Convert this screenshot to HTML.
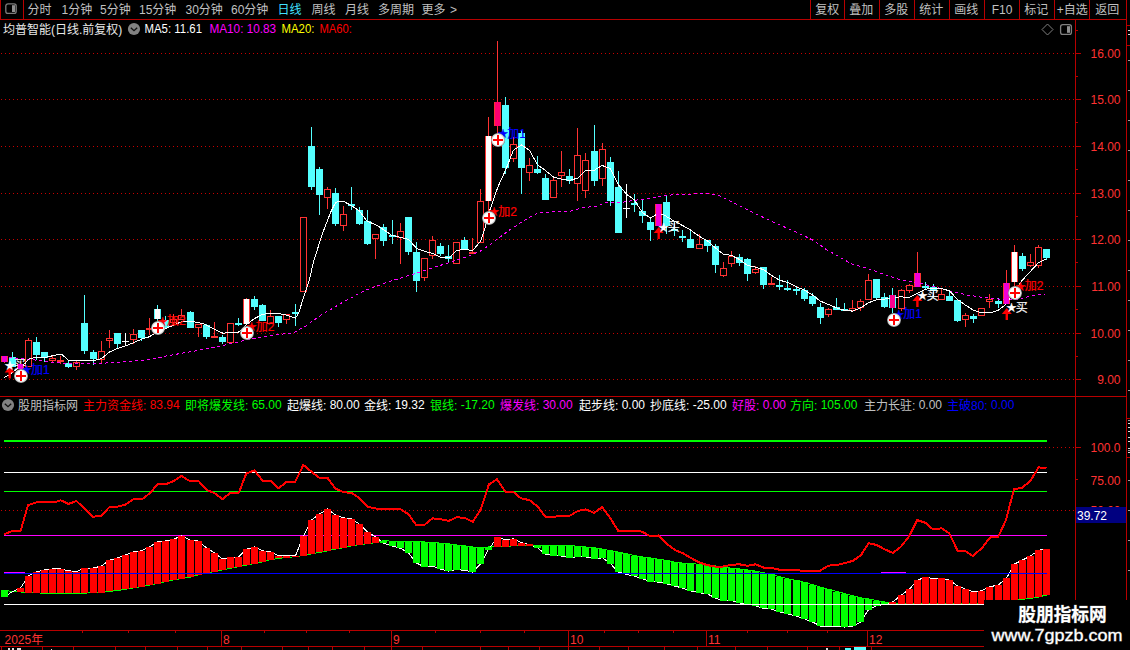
<!DOCTYPE html>
<html lang="zh-CN">
<head>
<meta charset="utf-8">
<title>均普智能 日线</title>
<style>
html,body{margin:0;padding:0;background:#000;}
body{width:1130px;height:650px;overflow:hidden;font-family:"Liberation Sans","Noto Sans CJK SC",sans-serif;}
svg text{white-space:pre;}
</style>
</head>
<body>
<svg width="1130" height="650" viewBox="0 0 1130 650" style="display:block">
<g shape-rendering="crispEdges">
<line x1="1" x2="1074" y1="53.5" y2="53.5" stroke="#c80000" stroke-width="1" stroke-dasharray="1 3"/>
<line x1="1" x2="1074" y1="99.5" y2="99.5" stroke="#c80000" stroke-width="1" stroke-dasharray="1 3"/>
<line x1="1" x2="1074" y1="146.5" y2="146.5" stroke="#c80000" stroke-width="1" stroke-dasharray="1 3"/>
<line x1="1" x2="1074" y1="193.5" y2="193.5" stroke="#c80000" stroke-width="1" stroke-dasharray="1 3"/>
<line x1="1" x2="1074" y1="239.5" y2="239.5" stroke="#c80000" stroke-width="1" stroke-dasharray="1 3"/>
<line x1="1" x2="1074" y1="286.5" y2="286.5" stroke="#c80000" stroke-width="1" stroke-dasharray="1 3"/>
<line x1="1" x2="1074" y1="333.5" y2="333.5" stroke="#c80000" stroke-width="1" stroke-dasharray="1 3"/>
<line x1="1" x2="1074" y1="379.5" y2="379.5" stroke="#c80000" stroke-width="1" stroke-dasharray="1 3"/>
<line x1="1" x2="1074" y1="447.5" y2="447.5" stroke="#c80000" stroke-width="1" stroke-dasharray="1 3"/>
<line x1="1" x2="1074" y1="510.5" y2="510.5" stroke="#c80000" stroke-width="1" stroke-dasharray="1 3"/>
</g>
<g shape-rendering="crispEdges">
<rect x="4" y="440" width="1043" height="2" fill="#00ff00"/>
<rect x="4" y="472" width="1043" height="1" fill="#ffffff"/>
<rect x="4" y="491" width="1043" height="1" fill="#00ff00"/>
<rect x="4" y="535" width="1043" height="1" fill="#ff00ff"/>
</g>
<polyline points="4.5,590.2 12.5,591.5 20.5,592 28.5,592.6 36.5,592.7 44.5,593.4 52.5,593.4 60.5,593.4 68.5,593.4 76.5,593.4 84.5,593.1 93.5,592.7 101.5,592.6 109.5,591.4 117.5,590.5 125.5,589.3 133.5,588 141.5,586.6 149.5,585.1 157.5,583.6 165.5,581.7 173.5,579.9 181.5,578.7 190.5,577 198.5,574.8 206.5,573.1 214.5,571.6 222.5,569.9 230.5,568.2 238.5,566.8 246.5,565.1 254.5,563.5 262.5,561.8 270.5,559.7 278.5,558.4 286.5,557.5 295.5,556.7 303.5,555.5 311.5,553.8 319.5,552.5 327.5,550.8 335.5,549.1 343.5,547.8 351.5,545.8 359.5,544.6 367.5,543.7 375.5,542.7 383.5,540.7 392.5,541.2 400.5,541.2 408.5,541.5 416.5,541.5 424.5,542 432.5,542.4 440.5,543.2 448.5,543.8 456.5,545 464.5,545.8 472.5,547 480.5,547 488.5,547 497.5,546.6 505.5,546.6 513.5,545.8 521.5,545.6 529.5,545.6 537.5,545.3 545.5,545.3 553.5,545.6 561.5,545.6 569.5,545.8 577.5,546.1 585.5,547 594.5,547.8 602.5,549.1 610.5,550.6 618.5,552.2 626.5,553.8 634.5,555.5 642.5,557 650.5,558 658.5,559.2 666.5,560.4 674.5,562.1 682.5,563.1 690.5,563.5 699.5,564.3 707.5,565.1 715.5,566 723.5,567.2 731.5,568.2 739.5,569 747.5,569.9 755.5,571.1 763.5,572.6 771.5,574.4 779.5,576.6 787.5,578.6 796.5,580.5 804.5,582.5 812.5,584.6 820.5,587.1 828.5,589.3 836.5,591.5 844.5,593.5 852.5,595.7 860.5,597.8 868.5,598.9 876.5,600.6 884.5,602 892.5,603.8 901.5,603.8 909.5,603.8 917.5,603.8 925.5,603.8 933.5,603.8 941.5,603.8 949.5,603.8 957.5,603.8 965.5,603.8 973.5,603.8 981.5,603.8 989.5,603 998.5,602.5 1006.5,601.5 1014.5,600.5 1022.5,599.3 1030.5,598.4 1038.5,597 1046.5,595" fill="none" stroke="#00ff00" stroke-width="1" shape-rendering="crispEdges"/>
<polyline points="4.5,596.8 12.5,591.5 20.5,588 28.5,575.8 36.5,571.9 44.5,569.9 52.5,568.9 60.5,568.9 68.5,570.7 76.5,571.9 84.5,568 93.5,568 101.5,566 109.5,560.1 117.5,558 125.5,555 133.5,551.9 141.5,550.8 149.5,546.9 157.5,542 165.5,541 173.5,539.3 181.5,535.9 190.5,540.1 198.5,541.1 206.5,547.9 214.5,553 222.5,558.9 230.5,557.2 238.5,557 246.5,549.1 254.5,547 262.5,550.8 270.5,551.9 278.5,555.8 286.5,555.8 295.5,555.8 303.5,535.8 311.5,520 319.5,514 327.5,509 335.5,515 343.5,517.8 351.5,519 359.5,524.1 367.5,531.9 375.5,537 383.5,543.2 392.5,546.1 400.5,548.3 408.5,553 416.5,563 424.5,566.9 432.5,566.1 440.5,569.1 448.5,571.1 456.5,569.5 464.5,570.4 472.5,572 480.5,563.9 488.5,549.5 497.5,537.2 505.5,539.7 513.5,538.9 521.5,542.8 529.5,544.5 537.5,547.8 545.5,554.1 553.5,555.8 561.5,556 569.5,557.6 577.5,556.8 585.5,556.8 594.5,558.8 602.5,557.8 610.5,563.7 618.5,572 626.5,574.5 634.5,576.1 642.5,578.7 650.5,581.7 658.5,582.1 666.5,583.8 674.5,586 682.5,588 690.5,590.9 699.5,592.7 707.5,593.9 715.5,598.1 723.5,600.7 731.5,600.7 739.5,602.9 747.5,604.1 755.5,605.8 763.5,608.3 771.5,609.1 779.5,611.8 787.5,613.8 796.5,616 804.5,618.9 812.5,622 820.5,626 828.5,626 836.5,626.5 844.5,627 852.5,626 860.5,622.3 868.5,609.6 876.5,605.9 884.5,604.2 892.5,602 901.5,595 909.5,589.1 917.5,580.1 925.5,577.2 933.5,578.6 941.5,578.1 949.5,580.1 957.5,586 965.5,589.1 973.5,591.9 981.5,590.8 989.5,587 998.5,584.8 1006.5,578.1 1014.5,564 1022.5,560 1030.5,556.1 1038.5,550.2 1046.5,549" fill="none" stroke="#ffffff" stroke-width="1" shape-rendering="crispEdges"/>
<g shape-rendering="crispEdges">
<rect x="1" y="590" width="7" height="7" fill="#00ff00"/>
<rect x="17" y="588" width="7" height="4" fill="#ff0000"/>
<rect x="25" y="576" width="7" height="17" fill="#ff0000"/>
<rect x="33" y="572" width="7" height="21" fill="#ff0000"/>
<rect x="41" y="570" width="7" height="23" fill="#ff0000"/>
<rect x="49" y="569" width="7" height="24" fill="#ff0000"/>
<rect x="57" y="569" width="7" height="24" fill="#ff0000"/>
<rect x="65" y="571" width="7" height="22" fill="#ff0000"/>
<rect x="73" y="572" width="7" height="21" fill="#ff0000"/>
<rect x="81" y="568" width="7" height="25" fill="#ff0000"/>
<rect x="90" y="568" width="7" height="25" fill="#ff0000"/>
<rect x="98" y="566" width="7" height="27" fill="#ff0000"/>
<rect x="106" y="560" width="7" height="31" fill="#ff0000"/>
<rect x="114" y="558" width="7" height="32" fill="#ff0000"/>
<rect x="122" y="555" width="7" height="34" fill="#ff0000"/>
<rect x="130" y="552" width="7" height="36" fill="#ff0000"/>
<rect x="138" y="551" width="7" height="36" fill="#ff0000"/>
<rect x="146" y="547" width="7" height="38" fill="#ff0000"/>
<rect x="154" y="542" width="7" height="42" fill="#ff0000"/>
<rect x="162" y="541" width="7" height="41" fill="#ff0000"/>
<rect x="170" y="539" width="7" height="41" fill="#ff0000"/>
<rect x="178" y="536" width="7" height="43" fill="#ff0000"/>
<rect x="187" y="540" width="7" height="37" fill="#ff0000"/>
<rect x="195" y="541" width="7" height="34" fill="#ff0000"/>
<rect x="203" y="548" width="7" height="25" fill="#ff0000"/>
<rect x="211" y="553" width="7" height="19" fill="#ff0000"/>
<rect x="219" y="559" width="7" height="11" fill="#ff0000"/>
<rect x="227" y="557" width="7" height="11" fill="#ff0000"/>
<rect x="235" y="557" width="7" height="10" fill="#ff0000"/>
<rect x="243" y="549" width="7" height="16" fill="#ff0000"/>
<rect x="251" y="547" width="7" height="17" fill="#ff0000"/>
<rect x="259" y="551" width="7" height="11" fill="#ff0000"/>
<rect x="267" y="552" width="7" height="8" fill="#ff0000"/>
<rect x="275" y="556" width="7" height="2" fill="#ff0000"/>
<rect x="283" y="556" width="7" height="2" fill="#ff0000"/>
<rect x="292" y="556" width="7" height="1" fill="#ff0000"/>
<rect x="300" y="536" width="7" height="20" fill="#ff0000"/>
<rect x="308" y="520" width="7" height="34" fill="#ff0000"/>
<rect x="316" y="514" width="7" height="38" fill="#ff0000"/>
<rect x="324" y="509" width="7" height="42" fill="#ff0000"/>
<rect x="332" y="515" width="7" height="34" fill="#ff0000"/>
<rect x="340" y="518" width="7" height="30" fill="#ff0000"/>
<rect x="348" y="519" width="7" height="27" fill="#ff0000"/>
<rect x="356" y="524" width="7" height="21" fill="#ff0000"/>
<rect x="364" y="532" width="7" height="12" fill="#ff0000"/>
<rect x="372" y="537" width="7" height="6" fill="#ff0000"/>
<rect x="380" y="541" width="7" height="2" fill="#00ff00"/>
<rect x="389" y="541" width="7" height="5" fill="#00ff00"/>
<rect x="397" y="541" width="7" height="7" fill="#00ff00"/>
<rect x="405" y="542" width="7" height="11" fill="#00ff00"/>
<rect x="413" y="542" width="7" height="21" fill="#00ff00"/>
<rect x="421" y="542" width="7" height="25" fill="#00ff00"/>
<rect x="429" y="542" width="7" height="24" fill="#00ff00"/>
<rect x="437" y="543" width="7" height="26" fill="#00ff00"/>
<rect x="445" y="544" width="7" height="27" fill="#00ff00"/>
<rect x="453" y="545" width="7" height="25" fill="#00ff00"/>
<rect x="461" y="546" width="7" height="24" fill="#00ff00"/>
<rect x="469" y="547" width="7" height="25" fill="#00ff00"/>
<rect x="477" y="547" width="7" height="17" fill="#00ff00"/>
<rect x="485" y="547" width="7" height="3" fill="#00ff00"/>
<rect x="494" y="537" width="7" height="10" fill="#ff0000"/>
<rect x="502" y="540" width="7" height="7" fill="#ff0000"/>
<rect x="510" y="539" width="7" height="7" fill="#ff0000"/>
<rect x="518" y="543" width="7" height="3" fill="#ff0000"/>
<rect x="526" y="544" width="7" height="2" fill="#ff0000"/>
<rect x="534" y="545" width="7" height="3" fill="#00ff00"/>
<rect x="542" y="545" width="7" height="9" fill="#00ff00"/>
<rect x="550" y="546" width="7" height="10" fill="#00ff00"/>
<rect x="558" y="546" width="7" height="10" fill="#00ff00"/>
<rect x="566" y="546" width="7" height="12" fill="#00ff00"/>
<rect x="574" y="546" width="7" height="11" fill="#00ff00"/>
<rect x="582" y="547" width="7" height="10" fill="#00ff00"/>
<rect x="591" y="548" width="7" height="11" fill="#00ff00"/>
<rect x="599" y="549" width="7" height="9" fill="#00ff00"/>
<rect x="607" y="551" width="7" height="13" fill="#00ff00"/>
<rect x="615" y="552" width="7" height="20" fill="#00ff00"/>
<rect x="623" y="554" width="7" height="20" fill="#00ff00"/>
<rect x="631" y="556" width="7" height="20" fill="#00ff00"/>
<rect x="639" y="557" width="7" height="22" fill="#00ff00"/>
<rect x="647" y="558" width="7" height="24" fill="#00ff00"/>
<rect x="655" y="559" width="7" height="23" fill="#00ff00"/>
<rect x="663" y="560" width="7" height="24" fill="#00ff00"/>
<rect x="671" y="562" width="7" height="24" fill="#00ff00"/>
<rect x="679" y="563" width="7" height="25" fill="#00ff00"/>
<rect x="687" y="564" width="7" height="27" fill="#00ff00"/>
<rect x="696" y="564" width="7" height="29" fill="#00ff00"/>
<rect x="704" y="565" width="7" height="29" fill="#00ff00"/>
<rect x="712" y="566" width="7" height="32" fill="#00ff00"/>
<rect x="720" y="567" width="7" height="34" fill="#00ff00"/>
<rect x="728" y="568" width="7" height="33" fill="#00ff00"/>
<rect x="736" y="569" width="7" height="34" fill="#00ff00"/>
<rect x="744" y="570" width="7" height="34" fill="#00ff00"/>
<rect x="752" y="571" width="7" height="35" fill="#00ff00"/>
<rect x="760" y="573" width="7" height="35" fill="#00ff00"/>
<rect x="768" y="574" width="7" height="35" fill="#00ff00"/>
<rect x="776" y="577" width="7" height="35" fill="#00ff00"/>
<rect x="784" y="579" width="7" height="35" fill="#00ff00"/>
<rect x="793" y="580" width="7" height="36" fill="#00ff00"/>
<rect x="801" y="582" width="7" height="37" fill="#00ff00"/>
<rect x="809" y="585" width="7" height="37" fill="#00ff00"/>
<rect x="817" y="587" width="7" height="39" fill="#00ff00"/>
<rect x="825" y="589" width="7" height="37" fill="#00ff00"/>
<rect x="833" y="592" width="7" height="34" fill="#00ff00"/>
<rect x="841" y="594" width="7" height="33" fill="#00ff00"/>
<rect x="849" y="596" width="7" height="30" fill="#00ff00"/>
<rect x="857" y="598" width="7" height="24" fill="#00ff00"/>
<rect x="865" y="599" width="7" height="11" fill="#00ff00"/>
<rect x="873" y="601" width="7" height="5" fill="#00ff00"/>
<rect x="881" y="602" width="7" height="2" fill="#00ff00"/>
<rect x="889" y="602" width="7" height="2" fill="#ff0000"/>
<rect x="898" y="595" width="7" height="9" fill="#ff0000"/>
<rect x="906" y="589" width="7" height="15" fill="#ff0000"/>
<rect x="914" y="580" width="7" height="24" fill="#ff0000"/>
<rect x="922" y="577" width="7" height="27" fill="#ff0000"/>
<rect x="930" y="579" width="7" height="25" fill="#ff0000"/>
<rect x="938" y="578" width="7" height="26" fill="#ff0000"/>
<rect x="946" y="580" width="7" height="24" fill="#ff0000"/>
<rect x="954" y="586" width="7" height="18" fill="#ff0000"/>
<rect x="962" y="589" width="7" height="15" fill="#ff0000"/>
<rect x="970" y="592" width="7" height="12" fill="#ff0000"/>
<rect x="978" y="591" width="7" height="13" fill="#ff0000"/>
<rect x="986" y="587" width="7" height="16" fill="#ff0000"/>
<rect x="995" y="585" width="7" height="17" fill="#ff0000"/>
<rect x="1003" y="578" width="7" height="24" fill="#ff0000"/>
<rect x="1011" y="564" width="7" height="36" fill="#ff0000"/>
<rect x="1019" y="560" width="7" height="39" fill="#ff0000"/>
<rect x="1027" y="556" width="7" height="42" fill="#ff0000"/>
<rect x="1035" y="550" width="7" height="47" fill="#ff0000"/>
<rect x="1043" y="549" width="7" height="46" fill="#ff0000"/>
</g>
<g shape-rendering="crispEdges">
<rect x="4" y="604" width="980" height="1" fill="#ffffff"/>
<rect x="4" y="573" width="1043" height="1" fill="#0000ff"/>
<rect x="4" y="572" width="21" height="1" fill="#ff00ff"/>
<rect x="881" y="572" width="25" height="1" fill="#ff00ff"/>
</g>
<polyline points="4.2,534.1 12.7,531 20.6,531 27.9,505.3 36.4,502.3 44.5,502.3 55.8,501.9 60.6,500.2 68.5,503.9 76.5,501.1 84.6,508.7 92.6,516.8 101,515.8 109.5,507 117.6,506.6 125.5,504.5 133.7,499 143,498.5 150.6,492.6 157.7,483.8 166.7,483.8 173.7,481.1 181.3,475.9 188.9,480.6 198.2,480.6 206.7,489.9 214.3,493 222.4,499.2 230.4,492.8 238.8,492.8 246.4,473.3 254.6,470.5 262.5,480.6 270.5,480.6 278.6,488.2 286.7,481.8 295.2,481.8 303.4,464.9 311.3,471.6 319.3,477.7 327.4,477.7 335.5,488.7 343.7,492.1 351.8,493 359.7,498.4 367.9,506.8 376,508.5 379.5,509.4 400.7,509.4 408.3,514.1 416.2,524.9 424.4,524.9 432.5,518.3 440.4,519.2 448.6,520.9 456.7,517.3 464.6,517.8 472.8,521.9 481,508.9 488.9,484.4 497,479.3 505.2,491.7 513.3,492 521.2,498.4 529.4,500.1 537.5,506.4 545.4,516.9 553.6,516.9 561.7,515.7 569.8,515.7 577.7,511 585.9,509.4 594,512.8 602.1,507.2 610.2,518 618.3,531 626.2,531 634.3,530.5 642.5,531.8 650.4,536.4 658.5,535.5 666.7,543.7 674.8,549.9 682.9,553.3 690.9,558 699,562.3 707.1,565.1 715.2,566.5 723.4,566.5 731.3,564.8 739.4,564.3 747.5,565.7 755.7,564.3 763.7,567.6 771.7,568.1 779.8,569.8 796,570.3 804.1,570.7 820.2,570.7 828.3,565.6 836.5,565.1 844.4,563.1 852.5,561 860.7,555.5 868.6,543.1 876.7,545 884.9,549.5 893,552.9 900.9,546.7 909.1,536.3 917.1,520.1 925.2,522.7 933.1,529.4 941.6,528.3 949.2,533.2 957.7,550.9 965.3,550.9 972.9,556 982.2,547.7 990.7,536.7 998.3,536.7 1005.9,520.1 1014,489.3 1022,487.7 1030.4,480.9 1038.6,467.4 1046.5,468" fill="none" stroke="#ff0000" stroke-width="2" stroke-linejoin="round" shape-rendering="crispEdges"/>
<g shape-rendering="crispEdges">
<rect x="4" y="356" width="1" height="7" fill="#ff3232"/>
<rect x="1" y="356" width="7" height="6" fill="#ff3232"/>
<rect x="2" y="356" width="5" height="6" fill="#f000d8"/>
<rect x="12" y="352" width="1" height="15" fill="#54ffff"/>
<rect x="9" y="357" width="7" height="10" fill="#54ffff"/>
<rect x="20" y="364" width="1" height="5" fill="#ff3232"/>
<rect x="17" y="364" width="7" height="5" fill="#ff3232"/>
<rect x="18" y="364" width="5" height="5" fill="#f000d8"/>
<rect x="28" y="338" width="1" height="2" fill="#ff3232"/>
<rect x="25.5" y="340.5" width="6" height="26" fill="#000" stroke="#ff3232" stroke-width="1"/>
<rect x="36" y="337" width="1" height="23" fill="#54ffff"/>
<rect x="33" y="342" width="7" height="13" fill="#54ffff"/>
<rect x="44" y="352" width="1" height="10" fill="#54ffff"/>
<rect x="41" y="352" width="7" height="6" fill="#54ffff"/>
<rect x="52" y="355" width="1" height="3" fill="#ff3232"/>
<rect x="52" y="361" width="1" height="1" fill="#ff3232"/>
<rect x="49.5" y="358.5" width="6" height="2" fill="#000" stroke="#ff3232" stroke-width="1"/>
<rect x="60" y="356" width="1" height="8" fill="#ff3232"/>
<rect x="57" y="360" width="7" height="2" fill="#ff3232"/>
<rect x="68" y="361" width="1" height="7" fill="#54ffff"/>
<rect x="65" y="363" width="7" height="4" fill="#54ffff"/>
<rect x="76" y="360" width="1" height="2" fill="#ff3232"/>
<rect x="76" y="367" width="1" height="3" fill="#ff3232"/>
<rect x="73.5" y="362.5" width="6" height="4" fill="#000" stroke="#ff3232" stroke-width="1"/>
<rect x="84" y="295" width="1" height="59" fill="#54ffff"/>
<rect x="81" y="323" width="7" height="28" fill="#54ffff"/>
<rect x="93" y="350" width="1" height="15" fill="#54ffff"/>
<rect x="90" y="352" width="7" height="7" fill="#54ffff"/>
<rect x="101" y="341" width="1" height="10" fill="#ff3232"/>
<rect x="101" y="360" width="1" height="3" fill="#ff3232"/>
<rect x="98.5" y="351.5" width="6" height="8" fill="#000" stroke="#ff3232" stroke-width="1"/>
<rect x="109" y="330" width="1" height="8" fill="#ff3232"/>
<rect x="109" y="341" width="1" height="7" fill="#ff3232"/>
<rect x="106.5" y="338.5" width="6" height="2" fill="#000" stroke="#ff3232" stroke-width="1"/>
<rect x="117" y="333" width="1" height="15" fill="#54ffff"/>
<rect x="114" y="333" width="7" height="11" fill="#54ffff"/>
<rect x="125" y="333" width="1" height="12" fill="#ffffff"/>
<rect x="122" y="341" width="7" height="1" fill="#ffffff"/>
<rect x="133" y="329" width="1" height="5" fill="#ff3232"/>
<rect x="133" y="340" width="1" height="4" fill="#ff3232"/>
<rect x="130.5" y="334.5" width="6" height="5" fill="#000" stroke="#ff3232" stroke-width="1"/>
<rect x="141" y="330" width="1" height="11" fill="#54ffff"/>
<rect x="138" y="330" width="7" height="8" fill="#54ffff"/>
<rect x="149" y="318" width="1" height="17" fill="#ff3232"/>
<rect x="146" y="328" width="7" height="2" fill="#ff3232"/>
<rect x="157" y="305" width="1" height="19" fill="#54ffff"/>
<rect x="154" y="309" width="7" height="10" fill="#54ffff"/>
<rect x="155" y="309" width="5" height="10" fill="#ffffff"/>
<rect x="165" y="316" width="1" height="12" fill="#54ffff"/>
<rect x="162" y="320" width="7" height="8" fill="#54ffff"/>
<rect x="173" y="314" width="1" height="5" fill="#ff3232"/>
<rect x="173" y="323" width="1" height="3" fill="#ff3232"/>
<rect x="170.5" y="319.5" width="6" height="3" fill="#000" stroke="#ff3232" stroke-width="1"/>
<rect x="181" y="309" width="1" height="6" fill="#ff3232"/>
<rect x="178.5" y="315.5" width="6" height="4" fill="#000" stroke="#ff3232" stroke-width="1"/>
<rect x="190" y="311" width="1" height="17" fill="#54ffff"/>
<rect x="187" y="312" width="7" height="16" fill="#54ffff"/>
<rect x="198" y="328" width="1" height="9" fill="#ff3232"/>
<rect x="195.5" y="324.5" width="6" height="3" fill="#000" stroke="#ff3232" stroke-width="1"/>
<rect x="206" y="324" width="1" height="15" fill="#54ffff"/>
<rect x="203" y="325" width="7" height="12" fill="#54ffff"/>
<rect x="214" y="322" width="1" height="15" fill="#ff3232"/>
<rect x="211" y="336" width="7" height="2" fill="#ff3232"/>
<rect x="222" y="335" width="1" height="9" fill="#54ffff"/>
<rect x="219" y="337" width="7" height="5" fill="#54ffff"/>
<rect x="227.5" y="323.5" width="6" height="19" fill="#000" stroke="#ff3232" stroke-width="1"/>
<rect x="238" y="318" width="1" height="8" fill="#54ffff"/>
<rect x="235" y="323" width="7" height="2" fill="#54ffff"/>
<rect x="246" y="298" width="1" height="26" fill="#ff3232"/>
<rect x="243" y="299" width="7" height="25" fill="#ff3232"/>
<rect x="244" y="299" width="5" height="25" fill="#ffffff"/>
<rect x="254" y="296" width="1" height="14" fill="#54ffff"/>
<rect x="251" y="299" width="7" height="8" fill="#54ffff"/>
<rect x="262" y="304" width="1" height="17" fill="#54ffff"/>
<rect x="259" y="305" width="7" height="16" fill="#54ffff"/>
<rect x="270" y="310" width="1" height="6" fill="#ff3232"/>
<rect x="267.5" y="316.5" width="6" height="7" fill="#000" stroke="#ff3232" stroke-width="1"/>
<rect x="278" y="316" width="1" height="11" fill="#54ffff"/>
<rect x="275" y="316" width="7" height="7" fill="#54ffff"/>
<rect x="286" y="320" width="1" height="4" fill="#ff3232"/>
<rect x="283.5" y="314.5" width="6" height="5" fill="#000" stroke="#ff3232" stroke-width="1"/>
<rect x="295" y="304" width="1" height="22" fill="#54ffff"/>
<rect x="292" y="312" width="7" height="2" fill="#54ffff"/>
<rect x="300.5" y="217.5" width="6" height="74" fill="#000" stroke="#ff3232" stroke-width="1"/>
<rect x="311" y="127" width="1" height="63" fill="#54ffff"/>
<rect x="308" y="146" width="7" height="41" fill="#54ffff"/>
<rect x="319" y="167" width="1" height="48" fill="#54ffff"/>
<rect x="316" y="169" width="7" height="26" fill="#54ffff"/>
<rect x="327" y="187" width="1" height="2" fill="#ff3232"/>
<rect x="327" y="198" width="1" height="11" fill="#ff3232"/>
<rect x="324.5" y="189.5" width="6" height="8" fill="#000" stroke="#ff3232" stroke-width="1"/>
<rect x="335" y="188" width="1" height="38" fill="#54ffff"/>
<rect x="332" y="193" width="7" height="31" fill="#54ffff"/>
<rect x="343" y="206" width="1" height="8" fill="#ff3232"/>
<rect x="343" y="226" width="1" height="5" fill="#ff3232"/>
<rect x="340.5" y="214.5" width="6" height="11" fill="#000" stroke="#ff3232" stroke-width="1"/>
<rect x="351" y="187" width="1" height="23" fill="#54ffff"/>
<rect x="348" y="204" width="7" height="2" fill="#54ffff"/>
<rect x="359" y="207" width="1" height="18" fill="#54ffff"/>
<rect x="356" y="210" width="7" height="14" fill="#54ffff"/>
<rect x="367" y="210" width="1" height="35" fill="#54ffff"/>
<rect x="364" y="221" width="7" height="23" fill="#54ffff"/>
<rect x="375" y="239" width="1" height="20" fill="#ff3232"/>
<rect x="372.5" y="234.5" width="6" height="4" fill="#000" stroke="#ff3232" stroke-width="1"/>
<rect x="383" y="224" width="1" height="22" fill="#54ffff"/>
<rect x="380" y="227" width="7" height="14" fill="#54ffff"/>
<rect x="392" y="220" width="1" height="24" fill="#54ffff"/>
<rect x="389" y="235" width="7" height="2" fill="#54ffff"/>
<rect x="400" y="223" width="1" height="8" fill="#ff3232"/>
<rect x="400" y="238" width="1" height="26" fill="#ff3232"/>
<rect x="397.5" y="231.5" width="6" height="6" fill="#000" stroke="#ff3232" stroke-width="1"/>
<rect x="408" y="217" width="1" height="38" fill="#54ffff"/>
<rect x="405" y="217" width="7" height="35" fill="#54ffff"/>
<rect x="416" y="242" width="1" height="50" fill="#54ffff"/>
<rect x="413" y="252" width="7" height="29" fill="#54ffff"/>
<rect x="424" y="278" width="1" height="3" fill="#ff3232"/>
<rect x="421.5" y="258.5" width="6" height="19" fill="#000" stroke="#ff3232" stroke-width="1"/>
<rect x="432" y="236" width="1" height="4" fill="#ff3232"/>
<rect x="432" y="256" width="1" height="3" fill="#ff3232"/>
<rect x="429.5" y="240.5" width="6" height="15" fill="#000" stroke="#ff3232" stroke-width="1"/>
<rect x="440" y="243" width="1" height="13" fill="#54ffff"/>
<rect x="437" y="246" width="7" height="8" fill="#54ffff"/>
<rect x="448" y="245" width="1" height="18" fill="#54ffff"/>
<rect x="445" y="256" width="7" height="3" fill="#54ffff"/>
<rect x="453.5" y="242.5" width="6" height="21" fill="#000" stroke="#ff3232" stroke-width="1"/>
<rect x="464" y="237" width="1" height="13" fill="#54ffff"/>
<rect x="461" y="240" width="7" height="10" fill="#54ffff"/>
<rect x="472" y="238" width="1" height="16" fill="#ff3232"/>
<rect x="469" y="252" width="7" height="2" fill="#ff3232"/>
<rect x="480" y="189" width="1" height="12" fill="#ff3232"/>
<rect x="477.5" y="201.5" width="6" height="41" fill="#000" stroke="#ff3232" stroke-width="1"/>
<rect x="488" y="117" width="1" height="94" fill="#ff3232"/>
<rect x="485" y="136" width="7" height="65" fill="#ff3232"/>
<rect x="486" y="136" width="5" height="65" fill="#ffffff"/>
<rect x="497" y="41" width="1" height="94" fill="#ff3232"/>
<rect x="494" y="102" width="7" height="24" fill="#ff3232"/>
<rect x="495" y="102" width="5" height="24" fill="#ff0070"/>
<rect x="505" y="97" width="1" height="77" fill="#54ffff"/>
<rect x="502" y="105" width="7" height="63" fill="#54ffff"/>
<rect x="513" y="137" width="1" height="7" fill="#ff3232"/>
<rect x="513" y="159" width="1" height="3" fill="#ff3232"/>
<rect x="510.5" y="144.5" width="6" height="14" fill="#000" stroke="#ff3232" stroke-width="1"/>
<rect x="521" y="130" width="1" height="64" fill="#54ffff"/>
<rect x="518" y="133" width="7" height="35" fill="#54ffff"/>
<rect x="529" y="158" width="1" height="7" fill="#ff3232"/>
<rect x="529" y="173" width="1" height="8" fill="#ff3232"/>
<rect x="526.5" y="165.5" width="6" height="7" fill="#000" stroke="#ff3232" stroke-width="1"/>
<rect x="537" y="156" width="1" height="18" fill="#54ffff"/>
<rect x="534" y="169" width="7" height="4" fill="#54ffff"/>
<rect x="545" y="174" width="1" height="26" fill="#54ffff"/>
<rect x="542" y="178" width="7" height="22" fill="#54ffff"/>
<rect x="553" y="177" width="1" height="3" fill="#ff3232"/>
<rect x="550.5" y="180.5" width="6" height="17" fill="#000" stroke="#ff3232" stroke-width="1"/>
<rect x="561" y="151" width="1" height="21" fill="#ff3232"/>
<rect x="561" y="176" width="1" height="11" fill="#ff3232"/>
<rect x="558.5" y="172.5" width="6" height="3" fill="#000" stroke="#ff3232" stroke-width="1"/>
<rect x="569" y="169" width="1" height="15" fill="#54ffff"/>
<rect x="566" y="176" width="7" height="5" fill="#54ffff"/>
<rect x="577" y="128" width="1" height="27" fill="#ff3232"/>
<rect x="577" y="184" width="1" height="17" fill="#ff3232"/>
<rect x="574.5" y="155.5" width="6" height="28" fill="#000" stroke="#ff3232" stroke-width="1"/>
<rect x="585" y="153" width="1" height="7" fill="#ff3232"/>
<rect x="585" y="191" width="1" height="7" fill="#ff3232"/>
<rect x="582.5" y="160.5" width="6" height="30" fill="#000" stroke="#ff3232" stroke-width="1"/>
<rect x="594" y="125" width="1" height="61" fill="#54ffff"/>
<rect x="591" y="151" width="7" height="30" fill="#54ffff"/>
<rect x="602" y="143" width="1" height="6" fill="#ff3232"/>
<rect x="602" y="179" width="1" height="7" fill="#ff3232"/>
<rect x="599.5" y="149.5" width="6" height="29" fill="#000" stroke="#ff3232" stroke-width="1"/>
<rect x="610" y="157" width="1" height="49" fill="#54ffff"/>
<rect x="607" y="162" width="7" height="39" fill="#54ffff"/>
<rect x="618" y="171" width="1" height="62" fill="#54ffff"/>
<rect x="615" y="187" width="7" height="46" fill="#54ffff"/>
<rect x="626" y="184" width="1" height="34" fill="#ffffff"/>
<rect x="623" y="208" width="7" height="1" fill="#ffffff"/>
<rect x="634" y="194" width="1" height="18" fill="#54ffff"/>
<rect x="631" y="203" width="7" height="2" fill="#54ffff"/>
<rect x="642" y="200" width="1" height="23" fill="#54ffff"/>
<rect x="639" y="211" width="7" height="5" fill="#54ffff"/>
<rect x="650" y="218" width="1" height="23" fill="#54ffff"/>
<rect x="647" y="222" width="7" height="8" fill="#54ffff"/>
<rect x="658" y="204" width="1" height="22" fill="#ff3232"/>
<rect x="655" y="204" width="7" height="22" fill="#ff3232"/>
<rect x="656" y="204" width="5" height="22" fill="#f000d8"/>
<rect x="666" y="196" width="1" height="38" fill="#54ffff"/>
<rect x="663" y="202" width="7" height="24" fill="#54ffff"/>
<rect x="674" y="221" width="1" height="15" fill="#54ffff"/>
<rect x="671" y="229" width="7" height="2" fill="#54ffff"/>
<rect x="682" y="230" width="1" height="12" fill="#54ffff"/>
<rect x="679" y="236" width="7" height="2" fill="#54ffff"/>
<rect x="690" y="229" width="1" height="19" fill="#54ffff"/>
<rect x="687" y="239" width="7" height="9" fill="#54ffff"/>
<rect x="699" y="234" width="1" height="10" fill="#ff3232"/>
<rect x="696.5" y="244.5" width="6" height="4" fill="#000" stroke="#ff3232" stroke-width="1"/>
<rect x="707" y="240" width="1" height="12" fill="#54ffff"/>
<rect x="704" y="240" width="7" height="6" fill="#54ffff"/>
<rect x="715" y="244" width="1" height="29" fill="#54ffff"/>
<rect x="712" y="246" width="7" height="19" fill="#54ffff"/>
<rect x="723" y="262" width="1" height="6" fill="#ff3232"/>
<rect x="723" y="276" width="1" height="1" fill="#ff3232"/>
<rect x="720.5" y="268.5" width="6" height="7" fill="#000" stroke="#ff3232" stroke-width="1"/>
<rect x="731" y="251" width="1" height="5" fill="#ff3232"/>
<rect x="731" y="264" width="1" height="3" fill="#ff3232"/>
<rect x="728.5" y="256.5" width="6" height="7" fill="#000" stroke="#ff3232" stroke-width="1"/>
<rect x="739" y="254" width="1" height="12" fill="#54ffff"/>
<rect x="736" y="257" width="7" height="6" fill="#54ffff"/>
<rect x="747" y="258" width="1" height="23" fill="#54ffff"/>
<rect x="744" y="259" width="7" height="15" fill="#54ffff"/>
<rect x="755" y="266" width="1" height="3" fill="#ff3232"/>
<rect x="755" y="273" width="1" height="1" fill="#ff3232"/>
<rect x="752.5" y="269.5" width="6" height="3" fill="#000" stroke="#ff3232" stroke-width="1"/>
<rect x="763" y="267" width="1" height="22" fill="#54ffff"/>
<rect x="760" y="267" width="7" height="18" fill="#54ffff"/>
<rect x="771" y="277" width="1" height="8" fill="#ff3232"/>
<rect x="768" y="283" width="7" height="2" fill="#ff3232"/>
<rect x="779" y="275" width="1" height="15" fill="#54ffff"/>
<rect x="776" y="285" width="7" height="2" fill="#54ffff"/>
<rect x="787" y="280" width="1" height="11" fill="#54ffff"/>
<rect x="784" y="288" width="7" height="2" fill="#54ffff"/>
<rect x="796" y="287" width="1" height="8" fill="#54ffff"/>
<rect x="793" y="289" width="7" height="2" fill="#54ffff"/>
<rect x="804" y="288" width="1" height="13" fill="#54ffff"/>
<rect x="801" y="290" width="7" height="9" fill="#54ffff"/>
<rect x="812" y="293" width="1" height="13" fill="#54ffff"/>
<rect x="809" y="296" width="7" height="8" fill="#54ffff"/>
<rect x="820" y="303" width="1" height="21" fill="#54ffff"/>
<rect x="817" y="307" width="7" height="11" fill="#54ffff"/>
<rect x="828" y="308" width="1" height="1" fill="#ff3232"/>
<rect x="828" y="315" width="1" height="2" fill="#ff3232"/>
<rect x="825.5" y="309.5" width="6" height="5" fill="#000" stroke="#ff3232" stroke-width="1"/>
<rect x="836" y="298" width="1" height="12" fill="#54ffff"/>
<rect x="833" y="307" width="7" height="3" fill="#54ffff"/>
<rect x="844" y="303" width="1" height="8" fill="#54ffff"/>
<rect x="841" y="309" width="7" height="2" fill="#54ffff"/>
<rect x="852" y="300" width="1" height="8" fill="#ff3232"/>
<rect x="849.5" y="308.5" width="6" height="2" fill="#000" stroke="#ff3232" stroke-width="1"/>
<rect x="860" y="299" width="1" height="2" fill="#ff3232"/>
<rect x="860" y="308" width="1" height="3" fill="#ff3232"/>
<rect x="857.5" y="301.5" width="6" height="6" fill="#000" stroke="#ff3232" stroke-width="1"/>
<rect x="868" y="274" width="1" height="6" fill="#ff3232"/>
<rect x="865.5" y="280.5" width="6" height="19" fill="#000" stroke="#ff3232" stroke-width="1"/>
<rect x="876" y="279" width="1" height="20" fill="#54ffff"/>
<rect x="873" y="279" width="7" height="19" fill="#54ffff"/>
<rect x="884" y="293" width="1" height="15" fill="#54ffff"/>
<rect x="881" y="297" width="7" height="10" fill="#54ffff"/>
<rect x="892" y="288" width="1" height="25" fill="#54ffff"/>
<rect x="889" y="295" width="7" height="13" fill="#54ffff"/>
<rect x="890" y="295" width="5" height="13" fill="#ff0090"/>
<rect x="901" y="289" width="1" height="1" fill="#ff3232"/>
<rect x="901" y="309" width="1" height="2" fill="#ff3232"/>
<rect x="898.5" y="290.5" width="6" height="18" fill="#000" stroke="#ff3232" stroke-width="1"/>
<rect x="909" y="284" width="1" height="1" fill="#ff3232"/>
<rect x="909" y="291" width="1" height="2" fill="#ff3232"/>
<rect x="906.5" y="285.5" width="6" height="5" fill="#000" stroke="#ff3232" stroke-width="1"/>
<rect x="917" y="252" width="1" height="35" fill="#ff3232"/>
<rect x="914" y="273" width="7" height="14" fill="#ff3232"/>
<rect x="915" y="273" width="5" height="14" fill="#f000d8"/>
<rect x="925" y="282" width="1" height="7" fill="#54ffff"/>
<rect x="922" y="286" width="7" height="2" fill="#54ffff"/>
<rect x="933" y="284" width="1" height="14" fill="#54ffff"/>
<rect x="930" y="287" width="7" height="4" fill="#54ffff"/>
<rect x="941" y="288" width="1" height="6" fill="#ff3232"/>
<rect x="938.5" y="294.5" width="6" height="5" fill="#000" stroke="#ff3232" stroke-width="1"/>
<rect x="949" y="292" width="1" height="9" fill="#54ffff"/>
<rect x="946" y="296" width="7" height="5" fill="#54ffff"/>
<rect x="957" y="300" width="1" height="22" fill="#54ffff"/>
<rect x="954" y="300" width="7" height="21" fill="#54ffff"/>
<rect x="965" y="313" width="1" height="2" fill="#ff3232"/>
<rect x="965" y="320" width="1" height="7" fill="#ff3232"/>
<rect x="962.5" y="315.5" width="6" height="4" fill="#000" stroke="#ff3232" stroke-width="1"/>
<rect x="973" y="314" width="1" height="9" fill="#54ffff"/>
<rect x="970" y="316" width="7" height="3" fill="#54ffff"/>
<rect x="978.5" y="308.5" width="6" height="7" fill="#000" stroke="#ff3232" stroke-width="1"/>
<rect x="989" y="294" width="1" height="5" fill="#ff3232"/>
<rect x="989" y="302" width="1" height="6" fill="#ff3232"/>
<rect x="986.5" y="299.5" width="6" height="2" fill="#000" stroke="#ff3232" stroke-width="1"/>
<rect x="998" y="298" width="1" height="10" fill="#54ffff"/>
<rect x="995" y="301" width="7" height="3" fill="#54ffff"/>
<rect x="1006" y="270" width="1" height="34" fill="#ff3232"/>
<rect x="1003" y="283" width="7" height="21" fill="#ff3232"/>
<rect x="1004" y="283" width="5" height="21" fill="#f000d8"/>
<rect x="1014" y="245" width="1" height="41" fill="#ff3232"/>
<rect x="1011" y="252" width="7" height="30" fill="#ff3232"/>
<rect x="1012" y="252" width="5" height="30" fill="#ffffff"/>
<rect x="1022" y="253" width="1" height="18" fill="#54ffff"/>
<rect x="1019" y="256" width="7" height="13" fill="#54ffff"/>
<rect x="1030" y="254" width="1" height="8" fill="#ff3232"/>
<rect x="1030" y="266" width="1" height="1" fill="#ff3232"/>
<rect x="1027.5" y="262.5" width="6" height="3" fill="#000" stroke="#ff3232" stroke-width="1"/>
<rect x="1038" y="245" width="1" height="2" fill="#ff3232"/>
<rect x="1038" y="266" width="1" height="2" fill="#ff3232"/>
<rect x="1035.5" y="247.5" width="6" height="18" fill="#000" stroke="#ff3232" stroke-width="1"/>
<rect x="1046" y="249" width="1" height="11" fill="#54ffff"/>
<rect x="1043" y="249" width="7" height="9" fill="#54ffff"/>
</g>
<polyline points="9.2,357.1 18.5,358.5 29.5,359.4 41.5,360.8 52.6,362.2 64.6,363.3 78.4,363.6 94.8,363.2 111.7,362.9 135.4,360.9 152.3,359.2 166.9,355.8 192.3,351.5 217.7,346.8 234.6,342.7 251.5,338.8 268.4,336 293.8,332.6 305.7,326.1 319.2,316.3 340.9,303.3 364.6,290.6 390,281.3 416.5,273.2 432.3,267.8 449.2,262.7 467.7,256.3 479.5,251.7 493.1,242.4 510,229.7 526.9,218.7 538.7,212.8 552.3,211.9 569.2,211.4 582.3,207.8 596.9,206.1 605.4,202.7 622.3,202.2 639.2,199.7 652.8,198 659.5,196.3 674.8,194.6 698.4,193.8 715.4,194.1 720.4,196.3 732.3,202.2 749.2,210.7 770,220.6 802.5,235 814.3,240.9 826.1,249.4 838,256.2 851.5,263.8 868.4,268.8 885.4,274.8 902.3,280.3 916.9,282.5 933.8,286.7 950.8,291.3 967.7,295.1 984.6,297.7 1001.5,299.4 1018.4,299 1035.4,295.1 1045.5,293.9" fill="none" stroke="#ff00ff" stroke-width="1" stroke-dasharray="3 3" shape-rendering="crispEdges"/>
<polyline points="4.2,377.6 9.2,374.7 17,369 24.9,363.6 28.6,359.2 33.8,357.8 46.1,357.1 52.6,355.8 59,354.3 62.5,355 68.6,360.4 80,360.8 94.8,360.4 101.5,358.7 109.5,351.9 117.6,348.5 125.2,346 133.7,342.6 141.6,339.2 149.4,336.7 153.8,334.2 157.7,331.5 165.8,328.5 175.1,324.5 181.4,321.8 193,321.6 202.7,323.6 206.3,325 214.3,329.2 222.8,333.2 230.4,332.6 238.3,332.4 246.4,324.5 254.6,318.5 262.5,314.3 270.5,313.5 278.6,313.5 286.7,315.1 295.5,318.2 298.9,312.6 303.5,297.4 309.1,280.5 313.8,261 322.3,233.9 330.8,211.9 335.8,202.1 343.5,201.3 351.1,205.5 359.5,211.1 367.1,221.2 375.6,224.6 383.6,229.7 391.7,235.3 400.5,237.3 408.6,239.3 416.5,248.3 424.7,251.3 432.6,253.4 440.4,257.3 449.2,257.9 456.7,250.3 464.6,249.5 472.8,250.5 480.9,240.7 485.2,227.6 489.5,211 497.7,187.5 506.1,168.9 513.4,150.3 521.4,144.9 529.5,150.3 537.4,164.7 545.6,170.6 553.5,177 561.6,179.1 569.6,180.4 577.5,178.2 585.7,170.6 594.5,170.1 602,165.5 610.1,168.4 618.2,184.5 626.4,194.1 634.3,199.9 642.4,212.5 650.6,218 655.5,215 663.5,214.7 674.8,221.5 682.9,225.7 690.9,230.3 699,236.2 707.1,240.6 715.2,247.7 723.2,254.1 731.3,255.3 739.4,259.5 747.5,265.4 755.5,267.1 763.6,269.7 771.7,275.6 779.8,280.3 787.9,282.4 796,286.6 804.1,290 812.1,294.6 820.2,301 828.3,304.4 836.4,307.8 844.4,310.3 852.5,311.1 860.6,307.8 868.7,302.7 876.8,299.6 884.8,299 892.9,297.9 901,296.8 909.1,297.6 917.2,293.4 925.2,289.2 933.3,288.4 941.5,288.4 949.4,290.9 957.5,299.4 965.7,305.3 973.8,310.4 981.7,312.9 989.8,312.9 998,310.4 1005.9,304.5 1014,292.3 1021.8,280.8 1030.3,271.5 1038.2,263 1046.4,258.8" fill="none" stroke="#ffffff" stroke-width="1" shape-rendering="crispEdges"/>
<defs><radialGradient id="cg" cx="50%" cy="50%" r="50%"><stop offset="0" stop-color="#fff"/><stop offset="0.72" stop-color="#fff"/><stop offset="0.9" stop-color="#c8c8c8"/><stop offset="1" stop-color="#707070"/></radialGradient></defs>
<g font-family='&quot;Liberation Sans&quot;,&quot;Noto Sans CJK SC&quot;,sans-serif'>
<polygon points="9.7,366.5 4.7,372.5 14.7,372.5" fill="#ff0000"/>
<rect x="8.5" y="371.5" width="2.4" height="7" fill="#ff0000"/>
<polygon points="658.7,227 653.7,233 663.7,233" fill="#ff0000"/>
<rect x="657.5" y="232" width="2.4" height="7" fill="#ff0000"/>
<polygon points="917.4,295 912.4,301 922.4,301" fill="#ff0000"/>
<rect x="916.2" y="300" width="2.4" height="7" fill="#ff0000"/>
<polygon points="1006.8,308 1001.8,314 1011.8,314" fill="#ff0000"/>
<rect x="1005.6" y="313" width="2.4" height="7" fill="#ff0000"/>
<text x="4.7" y="369.1" fill="#ffffff" font-size="12" stroke="#ffffff" stroke-width="0.2"><tspan font-size="10" dy="-0.5">★</tspan><tspan x="14" dy="0.5">买</tspan></text>
<text x="658.5" y="231.1" fill="#ffffff" font-size="12" stroke="#ffffff" stroke-width="0.2"><tspan font-size="10" dy="-0.5">★</tspan><tspan x="667.8" dy="0.5">买</tspan></text>
<text x="917.5" y="299.6" fill="#ffffff" font-size="12" stroke="#ffffff" stroke-width="0.2"><tspan font-size="10" dy="-0.5">★</tspan><tspan x="926.8" dy="0.5">买</tspan></text>
<text x="1006.5" y="311.8" fill="#ffffff" font-size="12" stroke="#ffffff" stroke-width="0.2"><tspan font-size="10" dy="-0.5">★</tspan><tspan x="1015.8" dy="0.5">买</tspan></text>
<text x="157.6" y="325.2" fill="#ff0000" font-size="12" stroke="#ff0000" stroke-width="0.2"><tspan font-size="10" dy="-0.5">★</tspan><tspan x="166.9" dy="0.5">加2</tspan></text>
<text x="246.5" y="330.8" fill="#ff0000" font-size="12" stroke="#ff0000" stroke-width="0.2"><tspan font-size="10" dy="-0.5">★</tspan><tspan x="255.8" dy="0.5">加2</tspan></text>
<text x="489" y="215.8" fill="#ff0000" font-size="12" stroke="#ff0000" stroke-width="0.2"><tspan font-size="10" dy="-0.5">★</tspan><tspan x="498.3" dy="0.5">加2</tspan></text>
<text x="1015.4" y="290.4" fill="#ff0000" font-size="12" stroke="#ff0000" stroke-width="0.2"><tspan font-size="10" dy="-0.5">★</tspan><tspan x="1024.7" dy="0.5">加2</tspan></text>
<text x="21.8" y="373.5" fill="#0000ff" font-size="12" stroke="#0000ff" stroke-width="0.2"><tspan font-size="10" dy="-0.5">★</tspan><tspan x="31.1" dy="0.5">加1</tspan></text>
<text x="498" y="137.6" fill="#0000ff" font-size="12" stroke="#0000ff" stroke-width="0.2"><tspan font-size="10" dy="-0.5">★</tspan><tspan x="507.3" dy="0.5">加1</tspan></text>
<text x="893.9" y="318.1" fill="#0000ff" font-size="12" stroke="#0000ff" stroke-width="0.2"><tspan font-size="10" dy="-0.5">★</tspan><tspan x="903.2" dy="0.5">加1</tspan></text>
</g>
<g shape-rendering="crispEdges">
<rect x="2" y="356" width="5" height="6" fill="#f000d8"/>
<rect x="18" y="364" width="5" height="5" fill="#f000d8"/>
<rect x="495" y="102" width="5" height="24" fill="#ff0070"/>
<rect x="656" y="204" width="5" height="22" fill="#f000d8"/>
<rect x="890" y="295" width="5" height="13" fill="#ff0090"/>
<rect x="915" y="273" width="5" height="14" fill="#f000d8"/>
<rect x="1004" y="283" width="5" height="21" fill="#f000d8"/>
</g>
<circle cx="21" cy="376" r="7" fill="url(#cg)"/>
<rect x="16" y="375" width="10" height="2" fill="#ff0000"/>
<rect x="20" y="371" width="2" height="10" fill="#ff0000"/>
<circle cx="158" cy="328" r="7" fill="url(#cg)"/>
<rect x="153" y="327" width="10" height="2" fill="#ff0000"/>
<rect x="157" y="323" width="2" height="10" fill="#ff0000"/>
<circle cx="247" cy="333" r="7" fill="url(#cg)"/>
<rect x="242" y="332" width="10" height="2" fill="#ff0000"/>
<rect x="246" y="328" width="2" height="10" fill="#ff0000"/>
<circle cx="489" cy="218" r="7" fill="url(#cg)"/>
<rect x="484" y="217" width="10" height="2" fill="#ff0000"/>
<rect x="488" y="213" width="2" height="10" fill="#ff0000"/>
<circle cx="498" cy="140" r="7" fill="url(#cg)"/>
<rect x="493" y="139" width="10" height="2" fill="#ff0000"/>
<rect x="497" y="135" width="2" height="10" fill="#ff0000"/>
<circle cx="894" cy="320" r="7" fill="url(#cg)"/>
<rect x="889" y="319" width="10" height="2" fill="#ff0000"/>
<rect x="893" y="315" width="2" height="10" fill="#ff0000"/>
<circle cx="1015" cy="293" r="7" fill="url(#cg)"/>
<rect x="1010" y="292" width="10" height="2" fill="#ff0000"/>
<rect x="1014" y="288" width="2" height="10" fill="#ff0000"/>
<g shape-rendering="crispEdges">
<rect x="0" y="19" width="1127" height="1" fill="#b80000"/>
<rect x="0" y="0" width="1" height="20" fill="#b80000"/>
<rect x="23" y="0" width="1" height="19" fill="#b80000"/>
<rect x="810" y="0" width="1" height="19" fill="#b80000"/>
<rect x="844" y="0" width="1" height="19" fill="#b80000"/>
<rect x="879" y="0" width="1" height="19" fill="#b80000"/>
<rect x="914" y="0" width="1" height="19" fill="#b80000"/>
<rect x="949" y="0" width="1" height="19" fill="#b80000"/>
<rect x="984" y="0" width="1" height="19" fill="#b80000"/>
<rect x="1019" y="0" width="1" height="19" fill="#b80000"/>
<rect x="1054" y="0" width="1" height="19" fill="#b80000"/>
<rect x="1089" y="0" width="1" height="19" fill="#b80000"/>
<rect x="1075" y="19" width="1" height="631" fill="#b80000"/>
<rect x="1126" y="0" width="1" height="650" fill="#b80000"/>
<rect x="0" y="396" width="1127" height="1" fill="#b80000"/>
<rect x="0" y="630" width="1076" height="1" fill="#b80000"/>
<rect x="0" y="646" width="1076" height="1" fill="#b80000"/>
<rect x="1076" y="53" width="5" height="1" fill="#b80000"/>
<rect x="1076" y="99" width="5" height="1" fill="#b80000"/>
<rect x="1076" y="146" width="5" height="1" fill="#b80000"/>
<rect x="1076" y="193" width="5" height="1" fill="#b80000"/>
<rect x="1076" y="239" width="5" height="1" fill="#b80000"/>
<rect x="1076" y="286" width="5" height="1" fill="#b80000"/>
<rect x="1076" y="333" width="5" height="1" fill="#b80000"/>
<rect x="1076" y="379" width="5" height="1" fill="#b80000"/>
<rect x="1076" y="76" width="2" height="1" fill="#b80000"/>
<rect x="1076" y="122" width="2" height="1" fill="#b80000"/>
<rect x="1076" y="169" width="2" height="1" fill="#b80000"/>
<rect x="1076" y="216" width="2" height="1" fill="#b80000"/>
<rect x="1076" y="262" width="2" height="1" fill="#b80000"/>
<rect x="1076" y="309" width="2" height="1" fill="#b80000"/>
<rect x="1076" y="356" width="2" height="1" fill="#b80000"/>
<rect x="1076" y="30" width="2" height="1" fill="#b80000"/>
<rect x="1076" y="447" width="5" height="1" fill="#b80000"/>
<rect x="1076" y="479" width="2" height="1" fill="#b80000"/>
<rect x="1076" y="510" width="5" height="1" fill="#b80000"/>
<rect x="221" y="630" width="1" height="16" fill="#b80000"/>
<rect x="391" y="630" width="1" height="16" fill="#b80000"/>
<rect x="568" y="630" width="1" height="16" fill="#b80000"/>
<rect x="706" y="630" width="1" height="16" fill="#b80000"/>
<rect x="867" y="630" width="1" height="16" fill="#b80000"/>
<rect x="82" y="630" width="1" height="3" fill="#b80000"/>
<rect x="128" y="630" width="1" height="3" fill="#b80000"/>
<rect x="175" y="630" width="1" height="3" fill="#b80000"/>
<rect x="264" y="630" width="1" height="3" fill="#b80000"/>
<rect x="306" y="630" width="1" height="3" fill="#b80000"/>
<rect x="349" y="630" width="1" height="3" fill="#b80000"/>
<rect x="435" y="630" width="1" height="3" fill="#b80000"/>
<rect x="480" y="630" width="1" height="3" fill="#b80000"/>
<rect x="524" y="630" width="1" height="3" fill="#b80000"/>
<rect x="604" y="630" width="1" height="3" fill="#b80000"/>
<rect x="638" y="630" width="1" height="3" fill="#b80000"/>
<rect x="673" y="630" width="1" height="3" fill="#b80000"/>
<rect x="747" y="630" width="1" height="3" fill="#b80000"/>
<rect x="787" y="630" width="1" height="3" fill="#b80000"/>
<rect x="827" y="630" width="1" height="3" fill="#b80000"/>
<rect x="1" y="646" width="1" height="4" fill="#b80000"/>
<rect x="42" y="646" width="1" height="4" fill="#b80000"/>
<rect x="73" y="646" width="1" height="4" fill="#b80000"/>
<rect x="115" y="646" width="1" height="4" fill="#b80000"/>
<rect x="145" y="646" width="1" height="4" fill="#b80000"/>
<rect x="177" y="646" width="1" height="4" fill="#b80000"/>
<rect x="207" y="646" width="1" height="4" fill="#b80000"/>
<rect x="241" y="646" width="1" height="4" fill="#b80000"/>
<rect x="282" y="646" width="1" height="4" fill="#b80000"/>
<rect x="308" y="646" width="1" height="4" fill="#b80000"/>
<rect x="332" y="646" width="1" height="4" fill="#b80000"/>
<rect x="364" y="646" width="1" height="4" fill="#b80000"/>
<rect x="391" y="646" width="1" height="4" fill="#b80000"/>
<rect x="422" y="646" width="1" height="4" fill="#b80000"/>
<rect x="480" y="646" width="1" height="4" fill="#b80000"/>
<rect x="508" y="646" width="1" height="4" fill="#b80000"/>
<rect x="539" y="646" width="1" height="4" fill="#b80000"/>
<rect x="568" y="646" width="1" height="4" fill="#b80000"/>
<rect x="599" y="646" width="1" height="4" fill="#b80000"/>
<rect x="628" y="646" width="1" height="4" fill="#b80000"/>
<rect x="664" y="646" width="1" height="4" fill="#b80000"/>
<rect x="697" y="646" width="1" height="4" fill="#b80000"/>
<rect x="735" y="646" width="1" height="4" fill="#b80000"/>
<rect x="767" y="646" width="1" height="4" fill="#b80000"/>
<rect x="807" y="646" width="1" height="4" fill="#b80000"/>
<rect x="839" y="646" width="1" height="4" fill="#b80000"/>
<rect x="871" y="646" width="1" height="4" fill="#b80000"/>
<rect x="8" y="648" width="2" height="2" fill="#e0e0e0"/>
<rect x="12" y="648" width="2" height="2" fill="#e0e0e0"/>
<rect x="17" y="648" width="4" height="2" fill="#e0e0e0"/>
<rect x="51" y="649" width="1" height="1" fill="#e0e0e0"/>
<rect x="826" y="648" width="2" height="2" fill="#e0e0e0"/>
<rect x="845" y="648" width="6" height="2" fill="#54ffff"/>
<rect x="854" y="647" width="12" height="3" fill="#54ffff"/>
<rect x="1127" y="25" width="3" height="1" fill="#b80000"/>
<rect x="1127" y="45" width="3" height="1" fill="#b80000"/>
<rect x="1127" y="418" width="3" height="1" fill="#b80000"/>
<rect x="1127" y="457" width="3" height="1" fill="#b80000"/>
<rect x="1128" y="60" width="2" height="1" fill="#a0a0a0"/>
<rect x="1128" y="90" width="2" height="1" fill="#a0a0a0"/>
<rect x="1128" y="120" width="2" height="1" fill="#a0a0a0"/>
<rect x="1128" y="150" width="2" height="1" fill="#a0a0a0"/>
<rect x="1128" y="180" width="2" height="1" fill="#a0a0a0"/>
<rect x="1128" y="210" width="2" height="1" fill="#a0a0a0"/>
<rect x="1128" y="240" width="2" height="1" fill="#a0a0a0"/>
<rect x="1128" y="270" width="2" height="1" fill="#a0a0a0"/>
<rect x="1128" y="300" width="2" height="1" fill="#a0a0a0"/>
<rect x="1128" y="330" width="2" height="1" fill="#a0a0a0"/>
<rect x="1128" y="360" width="2" height="1" fill="#a0a0a0"/>
<rect x="1128" y="390" width="2" height="1" fill="#a0a0a0"/>
<rect x="1128" y="420" width="2" height="1" fill="#a0a0a0"/>
<rect x="1128" y="450" width="2" height="1" fill="#a0a0a0"/>
<rect x="1128" y="480" width="2" height="1" fill="#a0a0a0"/>
<rect x="1128" y="510" width="2" height="1" fill="#a0a0a0"/>
<rect x="1128" y="540" width="2" height="1" fill="#a0a0a0"/>
<rect x="1128" y="570" width="2" height="1" fill="#a0a0a0"/>
<rect x="1128" y="30" width="2" height="1" fill="#e0e0e0"/>
<rect x="1128" y="34" width="2" height="1" fill="#e0e0e0"/>
<rect x="1128" y="423" width="2" height="1" fill="#e0e0e0"/>
<rect x="1128" y="427" width="2" height="1" fill="#e0e0e0"/>
<rect x="1128" y="431" width="2" height="1" fill="#e0e0e0"/>
<rect x="1128" y="437" width="2" height="1" fill="#e0e0e0"/>
<rect x="1128" y="441" width="2" height="1" fill="#e0e0e0"/>
<rect x="1128" y="448" width="2" height="1" fill="#e0e0e0"/>
<rect x="1128" y="452" width="2" height="1" fill="#e0e0e0"/>
<text x="1120.5" y="514.6" fill="#ff3232" font-size="12" text-anchor="end" font-family="&quot;Liberation Sans&quot;,sans-serif">50.00</text>
<rect x="1076" y="507" width="50" height="16" fill="#000080"/>
</g>
<g font-family='&quot;Liberation Sans&quot;,&quot;Noto Sans CJK SC&quot;,sans-serif'>
<text x="1120.5" y="57.8" fill="#ff3232" font-size="12" text-anchor="end">16.00</text>
<text x="1120.5" y="103.8" fill="#ff3232" font-size="12" text-anchor="end">15.00</text>
<text x="1120.5" y="150.8" fill="#ff3232" font-size="12" text-anchor="end">14.00</text>
<text x="1120.5" y="197.8" fill="#ff3232" font-size="12" text-anchor="end">13.00</text>
<text x="1120.5" y="243.8" fill="#ff3232" font-size="12" text-anchor="end">12.00</text>
<text x="1120.5" y="290.8" fill="#ff3232" font-size="12" text-anchor="end">11.00</text>
<text x="1120.5" y="337.8" fill="#ff3232" font-size="12" text-anchor="end">10.00</text>
<text x="1120.5" y="383.8" fill="#ff3232" font-size="12" text-anchor="end">9.00</text>
<text x="1120.5" y="451.8" fill="#ff3232" font-size="12" text-anchor="end">100.0</text>
<text x="1120.5" y="484.8" fill="#ff3232" font-size="12" text-anchor="end">75.00</text>
<text x="1077" y="519.5" fill="#ffffff" font-size="12">39.72</text>
<text x="4.5" y="644" fill="#ff3232" font-size="12">2025年</text>
<text x="223" y="644" fill="#ff3232" font-size="12">8</text>
<text x="393" y="644" fill="#ff3232" font-size="12">9</text>
<text x="570" y="644" fill="#ff3232" font-size="12">10</text>
<text x="708" y="644" fill="#ff3232" font-size="12">11</text>
<text x="869" y="644" fill="#ff3232" font-size="12">12</text>
</g>
<g font-family='&quot;Liberation Sans&quot;,&quot;Noto Sans CJK SC&quot;,sans-serif' font-size="12">
<text x="27.5" y="14" fill="#c0c0c0" font-size="12">分时</text>
<text x="61.5" y="14" fill="#c0c0c0" font-size="12">1分钟</text>
<text x="100" y="14" fill="#c0c0c0" font-size="12">5分钟</text>
<text x="139" y="14" fill="#c0c0c0" font-size="12">15分钟</text>
<text x="185.5" y="14" fill="#c0c0c0" font-size="12">30分钟</text>
<text x="231" y="14" fill="#c0c0c0" font-size="12">60分钟</text>
<text x="277.5" y="14" fill="#40e0ff" font-size="12">日线</text>
<text x="311.5" y="14" fill="#c0c0c0" font-size="12">周线</text>
<text x="345" y="14" fill="#c0c0c0" font-size="12">月线</text>
<text x="378" y="14" fill="#c0c0c0" font-size="12">多周期</text>
<text x="421.5" y="14" fill="#c0c0c0" font-size="12">更多</text>
<text x="450" y="14" fill="#c0c0c0" font-size="12">&gt;</text>
<text x="815.2" y="14" fill="#c0c0c0" font-size="12">复权</text>
<text x="849.2" y="14" fill="#c0c0c0" font-size="12">叠加</text>
<text x="884.2" y="14" fill="#c0c0c0" font-size="12">多股</text>
<text x="919.2" y="14" fill="#c0c0c0" font-size="12">统计</text>
<text x="954.2" y="14" fill="#c0c0c0" font-size="12">画线</text>
<text x="991.7" y="14" fill="#c0c0c0" font-size="12">F10</text>
<text x="1024.2" y="14" fill="#c0c0c0" font-size="12">标记</text>
<text x="1056.7" y="14" fill="#c0c0c0" font-size="12">+自选</text>
<text x="1095.2" y="14" fill="#c0c0c0" font-size="12">返回</text>
<text x="3" y="33.5" fill="#e8e8e8" font-size="12">均普智能(日线.前复权)</text>
<text x="144.5" y="32.6" fill="#ffffff" font-size="12" textLength="57.5" lengthAdjust="spacingAndGlyphs">MA5: 11.61</text>
<text x="209.5" y="32.6" fill="#ff00ff" font-size="12" textLength="66.5" lengthAdjust="spacingAndGlyphs">MA10: 10.83</text>
<text x="281.5" y="32.6" fill="#ffff00" font-size="12" textLength="33" lengthAdjust="spacingAndGlyphs">MA20:</text>
<text x="319.5" y="32.6" fill="#ff0000" font-size="12" textLength="32.5" lengthAdjust="spacingAndGlyphs">MA60:</text>
<text x="18" y="409.6" fill="#c0c0c0" font-size="12">股朋指标网</text>
<text x="83" y="409.6" fill="#ff0000" font-size="12">主力资金线: <tspan dy="-0.9">83.94</tspan></text>
<text x="185" y="409.6" fill="#00ff00" font-size="12">即将爆发线: <tspan dy="-0.9">65.00</tspan></text>
<text x="287" y="409.6" fill="#ffffff" font-size="12">起爆线: <tspan dy="-0.9">80.00</tspan></text>
<text x="364" y="409.6" fill="#ffffff" font-size="12">金线: <tspan dy="-0.9">19.32</tspan></text>
<text x="430" y="409.6" fill="#00ff00" font-size="12">银线: <tspan dy="-0.9">-17.20</tspan></text>
<text x="500" y="409.6" fill="#ff00ff" font-size="12">爆发线: <tspan dy="-0.9">30.00</tspan></text>
<text x="579" y="409.6" fill="#ffffff" font-size="12">起步线: <tspan dy="-0.9">0.00</tspan></text>
<text x="650" y="409.6" fill="#ffffff" font-size="12">抄底线: <tspan dy="-0.9">-25.00</tspan></text>
<text x="732" y="409.6" fill="#ff00ff" font-size="12">好股: <tspan dy="-0.9">0.00</tspan></text>
<text x="790" y="409.6" fill="#00ff00" font-size="12">方向: <tspan dy="-0.9">105.00</tspan></text>
<text x="864" y="409.6" fill="#c0c0c0" font-size="12">主力长驻: <tspan dy="-0.9">0.00</tspan></text>
<text x="947" y="409.6" fill="#0000ff" font-size="12">主破80: <tspan dy="-0.9">0.00</tspan></text>
</g>
<rect x="5.8" y="3.8" width="10.4" height="9.6" rx="2.2" fill="none" stroke="#7c7c7c" stroke-width="1.3"/>
<rect x="12" y="5.2" width="3.1" height="6.8" fill="#909090"/>
<rect x="1060.6" y="24.6" width="10.8" height="9.8" rx="2.2" fill="none" stroke="#808080" stroke-width="1.3"/>
<rect x="1067" y="26.2" width="3" height="6.6" fill="#909090"/>
<polygon points="1047.5,24 1053,29.5 1047.5,35 1042,29.5" fill="none" stroke="#808080" stroke-width="1"/>
<circle cx="134" cy="29" r="6.1" fill="#828282"/>
<polyline points="130.8,27.7 134,30.7 137.2,27.7" fill="none" stroke="#101010" stroke-width="1.3"/>
<circle cx="8" cy="405" r="6.1" fill="#828282"/>
<polyline points="4.8,403.7 8,406.7 11.2,403.7" fill="none" stroke="#101010" stroke-width="1.3"/>
<rect x="984" y="600" width="146" height="50" fill="#000000"/>
<g font-family='&quot;Liberation Sans&quot;,&quot;Noto Sans CJK SC&quot;,sans-serif'>
<text x="1062.5" y="621" fill="#ffffff" font-size="17.7" font-weight="bold" text-anchor="middle" stroke="#808080" stroke-width="0.6" paint-order="stroke">股朋指标网</text>
<text x="1057" y="640.5" fill="#ffffff" font-size="16" text-anchor="middle" stroke="#808080" stroke-width="0.8" paint-order="stroke" textLength="131" lengthAdjust="spacingAndGlyphs">www.7gpzb.com</text>
</g>
</svg>
</body>
</html>
